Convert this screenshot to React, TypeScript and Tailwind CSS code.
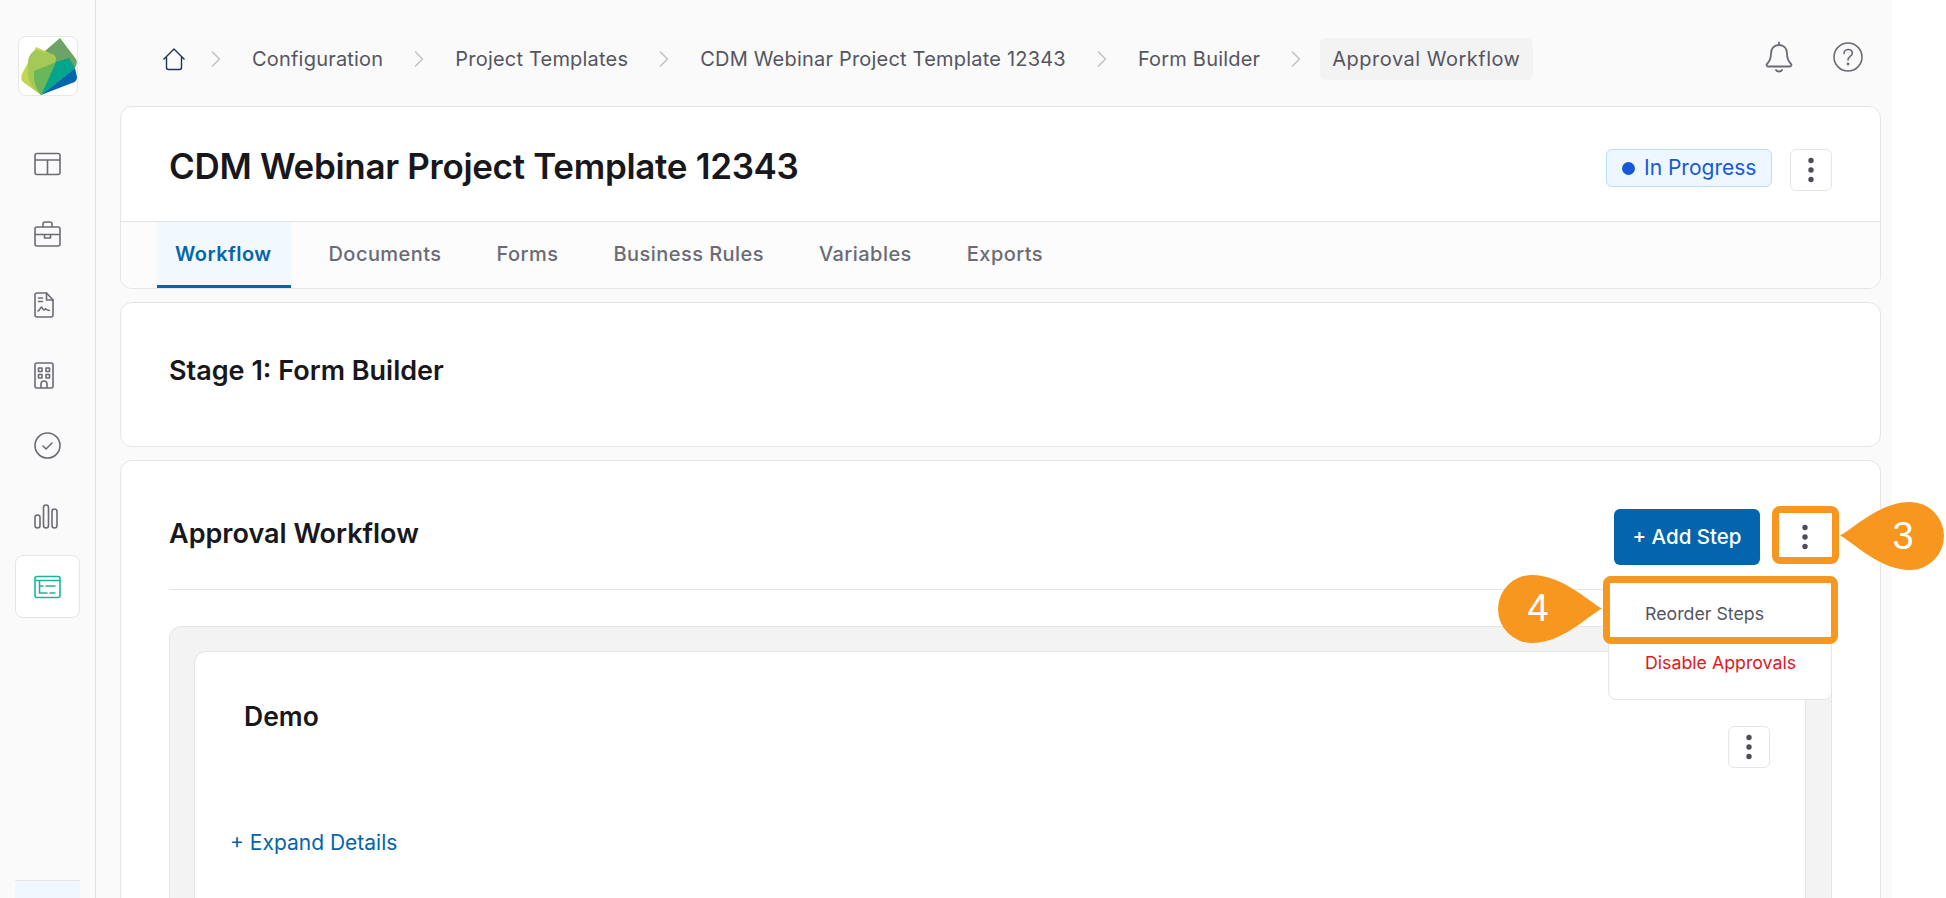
import type { ReactNode } from "react";

const iconGray = "#6b6b76";

function Kebab({ className }: { className: string }) {
  return (
    <button className={"flex items-center justify-center rounded-md border border-[#e5e5e5] bg-white " + className}>
      <svg width="6" height="26" viewBox="0 0 6 26" fill="#4d4d59">
        <circle cx="3" cy="3.5" r="2.7" />
        <circle cx="3" cy="13" r="2.7" />
        <circle cx="3" cy="22.5" r="2.7" />
      </svg>
    </button>
  );
}

function NavIcon({ children, active }: { children: ReactNode; active?: boolean }) {
  return (
    <div
      className={
        "flex h-[63px] w-[65px] items-center rounded-lg border pl-[18px] " +
        (active ? "border-[#e5e5e5] bg-white" : "border-transparent")
      }
    >
      {children}
    </div>
  );
}

function Sidebar() {
  return (
    <aside className="flex h-full w-[96px] shrink-0 flex-col border-r border-[#e0e0e0] bg-[#fafafa] pl-[15px]">
      <div className="mt-[36px] ml-[3px] flex h-[60px] w-[60px] items-center justify-center rounded-lg border border-[#e8e8e8] bg-white">
        <svg width="58" height="58" viewBox="0 0 58 58">
          <path d="M41 1 L57 22 Q59 26 56 31 L22 58 L26 14 Z" fill="#6da367" />
          <path d="M56 31 L58 40 Q58 45 53 46 L22 58 Z" fill="#0465ad" />
          <path d="M17 10 L35 18 Q38 21 36 25 L22 58 L4 45 Q1 42 3 37 Z" fill="#c3d551" />
          <path d="M9 24 Q10 16 17 13 L33 17 Q38 21 36 25 L22 58 Q11 50 9 40 Z" fill="#a5c957" />
          <path d="M37 25 L50 21 L56 31 L22 58 Z" fill="#03a58c" />
          <path d="M15 34 L37 25 L22 58 Q16 50 15 42 Z" fill="#6ab65a" />
        </svg>
      </div>
      <nav className="mt-[36px] flex flex-col gap-[7.5px]">
        <NavIcon>
          <svg width="27" height="24" viewBox="0 0 27 24" fill="none" stroke={iconGray} strokeWidth="1.6">
            <rect x="1" y="1.5" width="25" height="21" rx="2" />
            <path d="M1 8h25M13.5 8v14.5" />
          </svg>
        </NavIcon>
        <NavIcon>
          <svg width="27" height="26" viewBox="0 0 27 26" fill="none" stroke={iconGray} strokeWidth="1.6" strokeLinejoin="round">
            <rect x="1" y="6" width="25" height="19" rx="2" />
            <path d="M9 6V3a2 2 0 0 1 2-2h5a2 2 0 0 1 2 2v3M1 13.5h25M10.5 13.5v3.5h6v-3.5" />
          </svg>
        </NavIcon>
        <NavIcon>
          <svg width="20" height="26" viewBox="0 0 20 26" fill="none" stroke={iconGray} strokeWidth="1.6" strokeLinejoin="round" strokeLinecap="round">
            <path d="M3 1h9.5L19 8v15a2 2 0 0 1-2 2H3a2 2 0 0 1-2-2V3a2 2 0 0 1 2-2z" />
            <path d="M12.5 1v7H19M4.5 6h4M4.5 9.5h4M4 19c2-.5 2.5-4 3.5-4s1 3 2.5 3 1-2 2-1 2 1.500 3.500 1.500" />
          </svg>
        </NavIcon>
        <NavIcon>
          <svg width="20" height="27" viewBox="0 0 20 27" fill="none" stroke={iconGray} strokeWidth="1.6" strokeLinejoin="round">
            <rect x="1" y="1" width="18" height="25" rx="2" />
            <rect x="4.500" y="6" width="3.500" height="3.500" />
            <rect x="12" y="6" width="3.500" height="3.500" />
            <rect x="4.500" y="12.500" width="3.500" height="3.500" />
            <rect x="12" y="12.500" width="3.500" height="3.500" />
            <path d="M7 26v-4a3 3 0 0 1 6 0v4" />
          </svg>
        </NavIcon>
        <NavIcon>
          <svg width="27" height="27" viewBox="0 0 27 27" fill="none" stroke={iconGray} strokeWidth="1.6" strokeLinecap="round" strokeLinejoin="round">
            <circle cx="13.500" cy="13.500" r="12.500" />
            <path d="M9 14l3 3 6-6" />
          </svg>
        </NavIcon>
        <NavIcon>
          <svg width="24" height="25" viewBox="0 0 24 25" fill="none" stroke={iconGray} strokeWidth="1.6">
            <rect x="1" y="11" width="5" height="13" rx="2.500" />
            <rect x="9.500" y="1" width="5" height="23" rx="2.500" />
            <rect x="18" y="5" width="5" height="19" rx="2.500" />
          </svg>
        </NavIcon>
        <NavIcon active>
          <svg width="27" height="24" viewBox="0 0 27 24" fill="none" stroke="#1fb39b" strokeWidth="1.6">
            <rect x="1" y="1.500" width="25" height="21" rx="2" />
            <path d="M1 5.500h25M5.500 5.500v12.500h8M5.500 11h4M11.500 11h10M15.500 18h6" />
          </svg>
        </NavIcon>
      </nav>
      <div className="mt-auto h-[18px] w-[65px] border-t border-[#e5e5e5] bg-[#f1f7fe]" />
    </aside>
  );
}

function Chevron() {
  return (
    <svg width="10" height="18" viewBox="0 0 10 18" fill="none" stroke="#c4c4c8" strokeWidth="1.6" strokeLinecap="round" strokeLinejoin="round">
      <path d="M1.500 2l7 7-7 7" />
    </svg>
  );
}

function Breadcrumb() {
  const items = ["Configuration", "Project Templates", "CDM Webinar Project Template 12343", "Form Builder"];
  return (
    <div className="flex h-[106px] items-start justify-between pt-[38px] pr-[18px] pl-[42px]">
      <div className="flex h-[42px] items-center text-[20px] tracking-[0.2px] text-[#55555f]">
        <svg width="24" height="24" viewBox="0 0 24 24" fill="none" stroke="#1e3354" strokeWidth="1.4" strokeLinejoin="round">
          <path d="M1.500 12.500L12 2l10.500 10.500M4.500 10v10.500a2 2 0 0 0 2 2h11a2 2 0 0 0 2-2V10" />
        </svg>
        <span className="ml-[25px]"><Chevron /></span>
        {items.map((item) => (
          <div key={item} className="flex items-center">
            <span className="ml-[31px]">{item}</span>
            <span className="ml-[31px]"><Chevron /></span>
          </div>
        ))}
        <span className="ml-[19px] flex h-[42px] items-center rounded-md bg-[#f3f3f3] px-[12px] tracking-[0.5px]">Approval Workflow</span>
      </div>
      <div className="mt-[3px] flex items-center gap-[40px]">
        <svg width="28" height="32" viewBox="0 0 28 32" fill="none" stroke={iconGray} strokeWidth="1.8" strokeLinecap="round" strokeLinejoin="round">
          <path d="M14 1.500v2.500M14 4c-5 0-8 3.500-8 8.500 0 5-1.500 8-4 10.500-1 1 0 2.500 1 2.500h22c1 0 2-1.500 1-2.500-2.500-2.500-4-5.500-4-10.500C22 7.500 19 4 14 4zM11 29c1 2 5 2 6 0" />
        </svg>
        <svg width="30" height="30" viewBox="0 0 30 30" fill="none" stroke={iconGray} strokeWidth="1.6" strokeLinecap="round">
          <circle cx="15" cy="15" r="14" />
          <path d="M11 11.500c0-2.500 2-4 4.200-4 2.300 0 4.100 1.500 4.100 3.700 0 3.300-4.300 3.300-4.300 6.800" />
          <circle cx="15" cy="22" r="0.600" fill={iconGray} />
        </svg>
      </div>
    </div>
  );
}

function Tabs() {
  const tabs = ["Workflow", "Documents", "Forms", "Business Rules", "Variables", "Exports"];
  return (
    <div className="flex h-[66px] gap-[19px] rounded-b-xl bg-[#fcfcfc] pl-[36px]">
      {tabs.map((tab, i) => (
        <div
          key={tab}
          className={
            "flex items-center border-b-[3px] px-[18px] text-[20px] tracking-[0.45px] " +
            (i === 0 ? "border-[#0465ad] bg-[#f1f8fe] pr-[20px] font-semibold text-[#0465ad]" : "border-transparent font-medium text-[#6b6b76]")
          }
        >
          {tab}
        </div>
      ))}
    </div>
  );
}

export default function App() {
  return (
    <div className="relative flex h-[898px] w-[1946px] overflow-hidden bg-white font-['Inter',sans-serif] text-[#17171c]">
      <Sidebar />
      <main className="h-full w-[1796px] shrink-0 bg-[#fafafa] pl-[24px] pr-[11px]">
        <Breadcrumb />
        <section className="rounded-xl border border-[#e5e5e5] bg-white">
          <div className="flex h-[115px] items-start justify-between border-b border-[#e5e5e5] px-[48px] pt-[42px]">
            <h1 className="-mt-[8px] text-[35px] leading-[50px] font-semibold tracking-[-0.31px]">CDM Webinar Project Template 12343</h1>
            <div className="flex gap-[18px]">
              <span className="flex h-[38px] w-[166px] items-center gap-[9px] rounded-md border border-[#bcdcfb] bg-[#eef6ff] pl-[15px] text-[21px] text-[#1659d6]">
                <span className="h-[13px] w-[13px] rounded-full bg-[#1659d6]" />
                In Progress
              </span>
              <Kebab className="h-[42px] w-[42px]" />
            </div>
          </div>
          <Tabs />
        </section>
        <section className="mt-[13px] h-[145px] rounded-xl border border-[#e5e5e5] bg-white px-[48px] pt-[49px]">
          <h2 className="text-[27px] leading-[38px] font-semibold">Stage 1: Form Builder</h2>
        </section>
        <section className="mt-[13px] h-[600px] rounded-xl border border-[#e5e5e5] bg-white px-[48px]">
          <div className="flex h-[129px] items-start justify-between border-b border-[#e5e5e5] pt-[48px]">
            <h2 className="mt-[6px] text-[27px] leading-[38px] font-semibold">Approval Workflow</h2>
            <div className="flex items-center gap-[19px]">
              <button className="h-[56px] w-[146px] rounded-md bg-[#0465ad] text-[20.5px] font-medium text-white">+ Add Step</button>
              <Kebab className="h-[56px] w-[53px] border-transparent pr-[2px]" />
            </div>
          </div>
          <div className="mt-[36px] h-[400px] rounded-xl border border-[#e5e5e5] bg-[#f3f3f3] px-[25px] pt-[24px]">
            <div className="relative -ml-[1px] h-[400px] rounded-xl border border-[#e5e5e5] bg-white pl-[35px] pt-[46px]">
              <div className="flex justify-between pr-[35px] pl-[14px]">
                <h3 className="text-[26.5px] leading-[36px] font-semibold">Demo</h3>
                <Kebab className="mt-[28px] h-[42px] w-[42px]" />
              </div>
              <a className="mt-[59px] block text-[21px] text-[#0465ad]">+ Expand Details</a>
            </div>
          </div>
        </section>
      </main>

      {/* dropdown and tutorial callouts sit over the page */}
      <div className="absolute top-[576px] left-[1608px] h-[124px] w-[224px] rounded-b-lg border border-[#e5e5e5] bg-white pt-[24px] pl-[36px] text-[17.75px]">
        <div className="text-[#55555f]">Reorder Steps</div>
        <div className="mt-[22px] text-[#dc1a22]">Disable Approvals</div>
      </div>
      <div className="absolute top-[506px] left-[1772px] h-[58px] w-[67px] rounded-lg border-[7px] border-[#f89720]" />
      <div className="absolute top-[576px] left-[1603px] h-[68px] w-[235px] rounded-lg border-[7px] border-[#f89720]" />

      <div className="absolute top-[501px] left-[1840px] h-[69px] w-[105px]">
        <svg width="105" height="69" viewBox="0 0 105 69" className="absolute inset-0">
          <path d="M0 34.500C14 27 40 1 70 1a34 34 0 0 1 0 68C40 69 14 42 0 34.500Z" fill="#f89720" />
        </svg>
        <span className="absolute top-[14px] left-[49px] w-[28px] text-center font-['Liberation_Sans',sans-serif] text-[38px] leading-[42px] text-white">3</span>
      </div>
      <div className="absolute top-[574px] left-[1497px] h-[69px] w-[105px]">
        <svg width="105" height="69" viewBox="0 0 105 69" className="absolute inset-0">
          <path d="M105 34.500C91 27 65 1 35 1a34 34 0 0 0 0 68C65 69 91 42 105 34.500Z" fill="#f89720" />
        </svg>
        <span className="absolute top-[13px] left-[27px] w-[28px] text-center font-['Liberation_Sans',sans-serif] text-[38px] leading-[42px] text-white">4</span>
      </div>
    </div>
  );
}
